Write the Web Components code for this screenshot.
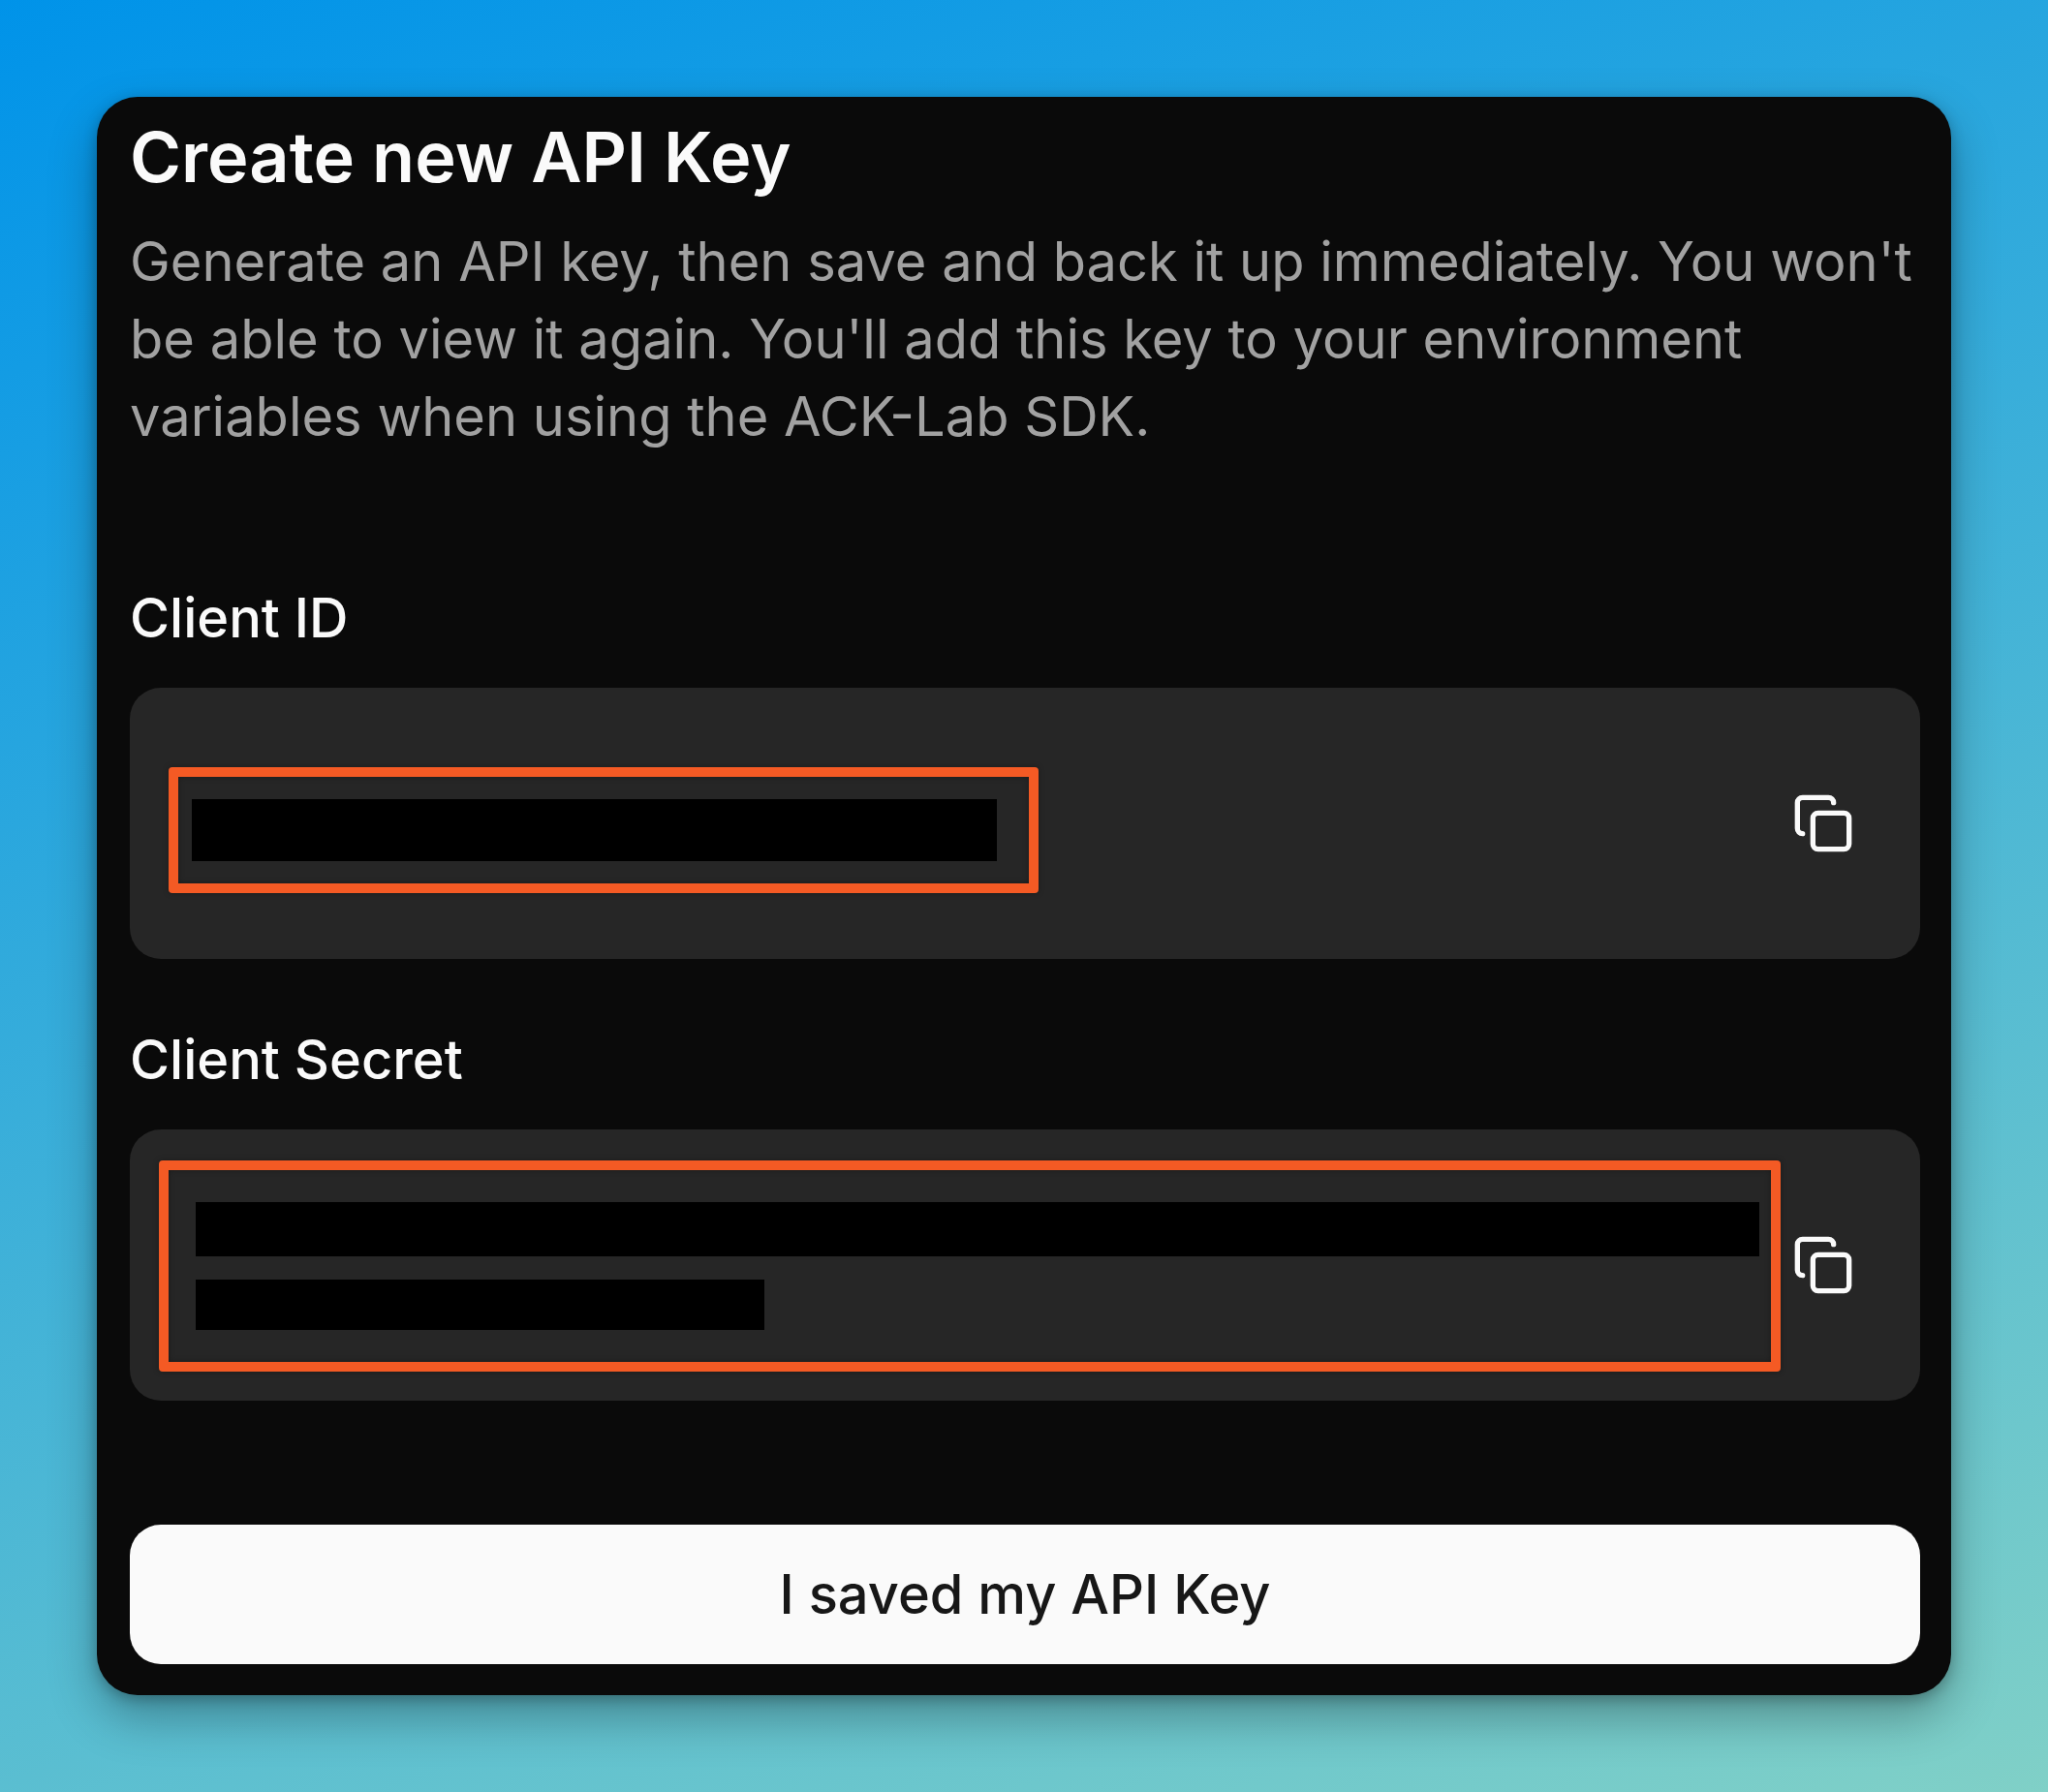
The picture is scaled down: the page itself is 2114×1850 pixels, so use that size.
<!DOCTYPE html>
<html lang="en">
<head>
<meta charset="utf-8">
<title>Create new API Key</title>
<style>
html,body{margin:0;height:100%}
body{font-family:Inter,"Liberation Sans",sans-serif;font-optical-sizing:none;overflow:hidden}
</style>
</head>
<body>
<api-stage>
  <api-dialog>
    <span slot="title">Create new API Key</span>
    <span slot="description">Generate an API key, then save and back it up immediately. You won't be able to view it again. You'll add this key to your environment variables when using the ACK-Lab SDK.</span>
    <secret-field label="Client ID">
      <redacted-value style="--x:40px;--y:82px;--w:878px;--h:110px;--pad:23px 0 0 14px">
        <redaction-bar style="width:831px;height:64px"></redaction-bar>
      </redacted-value>
    </secret-field>
    <secret-field label="Client Secret">
      <redacted-value style="--x:30px;--y:32px;--w:1654px;--h:198px;--pad:32.5px 0 0 28px">
        <redaction-bar style="width:1614px;height:56px"></redaction-bar>
        <redaction-bar style="width:587px;height:52px;margin-top:24px"></redaction-bar>
      </redacted-value>
    </secret-field>
    <action-button slot="footer">I saved my API Key</action-button>
  </api-dialog>
</api-stage>
<script>
const define = (name, html, setup) => customElements.define(name, class extends HTMLElement {
  constructor() {
    super();
    this.attachShadow({ mode: 'open' }).innerHTML = html;
  }
  connectedCallback() { if (setup) setup(this); }
});

define('api-stage', `<style>
:host{display:flex;box-sizing:border-box;width:2114px;height:1850px;padding:100px;
background:linear-gradient(160deg,#0093e9 0%,#80d0c7 100%)}
</style><slot></slot>`);

define('api-dialog', `<style>
:host{display:flex;flex-direction:column;box-sizing:border-box;width:1914px;height:1650px;padding:26px 32px 32px 34px;
background:#0a0a0a;border-radius:42px;color:#fafafa;box-shadow:0 22px 50px rgba(0,0,0,.3),0 4px 14px rgba(0,0,0,.25)}
h2{margin:0;font-size:72px;line-height:72px;font-weight:600;letter-spacing:0}
p{margin:32px 0 0;font-size:56px;line-height:80px;color:#a1a1a1;font-weight:400}
.fields{display:flex;flex-direction:column;gap:64px;margin:128px 0}
</style>
<h2><slot name="title"></slot></h2>
<p><slot name="description"></slot></p>
<div class="fields"><slot></slot></div>
<slot name="footer"></slot>`);

define('secret-field', `<style>
:host{display:flex;flex-direction:column;gap:32px}
label{font-size:56px;line-height:80px;font-weight:500}
.box{display:flex;align-items:center;justify-content:space-between;box-sizing:border-box;height:280px;padding-right:68px;background:#262626;border-radius:32px}
</style>
<label></label>
<div class="box"><slot></slot><copy-icon></copy-icon></div>`,
el => { el.shadowRoot.querySelector('label').textContent = el.getAttribute('label'); });

define('redacted-value', `<style>
:host{display:flex;flex-direction:column;box-sizing:content-box;flex:none;align-self:flex-start;width:var(--w);height:var(--h);margin:var(--y) 0 0 var(--x);
border:10px solid #f45a24;border-radius:4px;box-shadow:0 0 6px rgba(0,0,0,.3),inset 0 0 6px rgba(0,0,0,.3)}
.inner{padding:var(--pad)}
</style><div class="inner"><slot></slot></div>`);

define('redaction-bar', `<style>:host{display:block;background:#000}</style>`);

define('copy-icon', `<style>
:host{display:block;width:64px;height:64px;flex:none}
svg{display:block}
</style>
<svg width="64" height="64" viewBox="0 0 24 24" fill="none" stroke="#fafafa" stroke-width="2" stroke-linecap="round" stroke-linejoin="round"><rect x="8" y="8" width="14" height="14" rx="2"/><path d="M4 16c-1.1 0-2-.9-2-2V4c0-1.1.9-2 2-2h10c1.1 0 2 .9 2 2"/></svg>`);

define('action-button', `<style>
:host{display:block}
button{display:flex;align-items:center;justify-content:center;width:100%;height:144px;padding:0;border:0;border-radius:32px;
background:#fafafa;color:#171717;font:500 56px/80px Inter,"Liberation Sans",sans-serif;font-optical-sizing:none}
</style><button><slot></slot></button>`);
</script>
</body>
</html>
